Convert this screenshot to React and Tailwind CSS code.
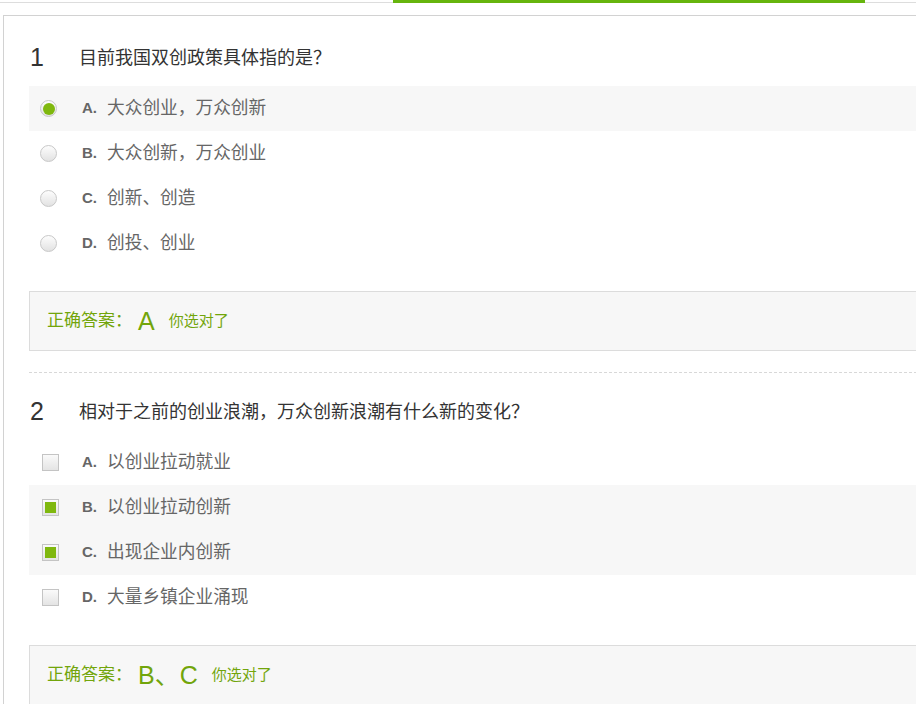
import React from "react";

const font = { fontFamily: '"Liberation Sans", "Noto Sans CJK SC", sans-serif' };

function Radio({ checked }) {
  return (
    <span className="w-[17px] h-[17px] rounded-full border border-[#c8c8c8] bg-gradient-to-b from-[#fdfdfd] to-[#e2e2e2] flex items-center justify-center shrink-0">
      {checked && <span className="w-[12px] h-[12px] rounded-full bg-[#7fb80e]" />}
    </span>
  );
}

function Check({ checked }) {
  return (
    <span className="w-[17px] h-[17px] border border-[#c4c4c4] bg-gradient-to-b from-[#fafafa] to-[#e4e4e4] flex items-center justify-center shrink-0">
      {checked && <span className="w-[11px] h-[11px] bg-[#7fb80e]" />}
    </span>
  );
}

function Option({ letter, text, checked, type }) {
  return (
    <div className={`h-[45px] flex items-center ${checked ? "bg-[#f7f7f7]" : ""}`}>
      <div className={type === "radio" ? "pl-[11px]" : "pl-[13px]"}>
        {type === "radio" ? <Radio checked={checked} /> : <Check checked={checked} />}
      </div>
      <span className={`${type === "radio" ? "ml-[25px]" : "ml-[23px]"} text-[15px] font-bold text-[#666]`}>{letter}.</span>
      <span className="ml-[10px] text-[17.7px] text-[#666]">{text}</span>
    </div>
  );
}

function Question({ num, title, options, type, answer }) {
  return (
    <div>
      <div className="h-[30px] flex items-center">
        <span className="w-[50px] pl-[1px] text-[25px] text-[#333]">{num}</span>
        <span className="text-[18px] text-[#333]">{title}</span>
      </div>
      <div className="mt-[13px]">
        {options.map((o) => (
          <Option key={o.l} letter={o.l} text={o.t} checked={o.c} type={type} />
        ))}
      </div>
      <div className="mt-[25px] h-[60px] border border-[#dcdcdc] bg-[#f7f7f7] flex items-center pl-[17px] text-[#72a50b]">
        <span className="text-[17px]">正确答案：</span>
        <span className="text-[25px] ml-[6px] leading-none">{answer}</span>
        <span className="text-[15px] ml-[14px]">你选对了</span>
      </div>
    </div>
  );
}

export default function App() {
  return (
    <div className="w-[916px] h-[704px] overflow-hidden bg-white relative" style={font}>
      <div className="relative h-[3px]">
        <div className="absolute left-0 right-0 top-[2px] h-px bg-[#dddddd]" />
        <div className="absolute left-[393px] w-[472px] top-0 h-[3px] bg-[#66b50d]" />
      </div>
      <div className="mt-[12px] ml-[3px] w-[1000px] border border-[#d2d2d2] pl-[25px] pt-[27px] pb-[40px]">
        <Question
          num="1"
          title="目前我国双创政策具体指的是？"
          type="radio"
          answer="A"
          options={[
            { l: "A", t: "大众创业，万众创新", c: true },
            { l: "B", t: "大众创新，万众创业" },
            { l: "C", t: "创新、创造" },
            { l: "D", t: "创投、创业" },
          ]}
        />
        <div className="mt-[21px] border-t border-dashed border-[#d8d8d8] mb-[24px]" />
        <Question
          num="2"
          title="相对于之前的创业浪潮，万众创新浪潮有什么新的变化？"
          type="check"
          answer="B、C"
          options={[
            { l: "A", t: "以创业拉动就业" },
            { l: "B", t: "以创业拉动创新", c: true },
            { l: "C", t: "出现企业内创新", c: true },
            { l: "D", t: "大量乡镇企业涌现" },
          ]}
        />
      </div>
    </div>
  );
}
